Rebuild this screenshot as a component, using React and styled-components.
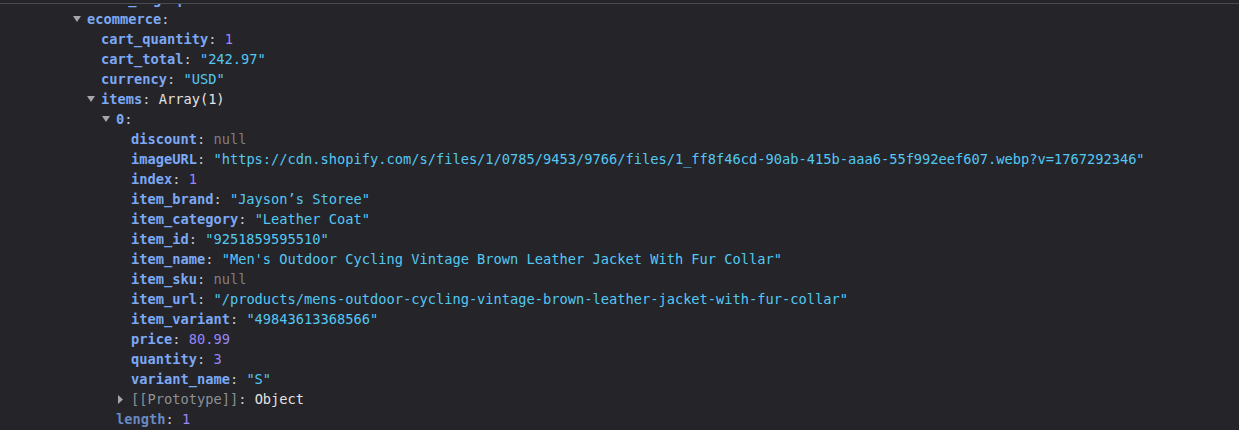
import React from "react";
import styled, { createGlobalStyle } from "styled-components";

const Global = createGlobalStyle`
  html, body { margin: 0; padding: 0; background: #242429; }
  body { overflow: hidden; }
`;

const Viewport = styled.div`
  position: relative;
  width: 1239px;
  height: 430px;
  overflow: hidden;
  background: #242429;
  font-family: "DejaVu Sans Mono", "Liberation Mono", monospace;
  font-size: 13.7px;
  color: #e3e3e3;
`;

const Tree = styled.div`
  display: flex;
  flex-direction: column;
  margin-top: -11px;
`;

const Row = styled.div`
  display: flex;
  align-items: center;
  height: 20px;
  white-space: pre;
  padding-left: ${(p) => p.$indent - 14}px;
`;

const Toggle = styled.span`
  display: inline-flex;
  align-items: center;
  justify-content: flex-start;
  width: 14px;
  height: 20px;
  flex: none;
`;

const Key = styled.span`
  font-weight: bold;
  color: ${(p) => (p.$dim ? "#6a89c2" : "#7ca8f4")};
`;

const ProtoKey = styled.span`
  color: #8e9196;
`;

const Colon = styled.span`
  color: #c8c8c8;
`;

const Value = styled.span`
  color: ${(p) =>
    ({
      string: "#55c8f2",
      number: "#9a86f8",
      null: "#7f7f84",
      object: "#e3e3e3",
      bool: "#9a86f8",
    }[p.$kind] || "#e3e3e3")};
`;

const TopEdge = styled.div`
  position: absolute;
  left: 0;
  right: 0;
  top: 0;
  height: 3px;
  background: #242429;
  border-bottom: 1px solid #4a4b50;
`;

const Caret = ({ open }) =>
  open ? (
    <svg width="8" height="6" viewBox="0 0 8 6">
      <path d="M0 0 L8 0 L4 6 Z" fill="#a4a6aa" />
    </svg>
  ) : (
    <svg width="6" height="9" viewBox="0 0 6 9" style={{ marginLeft: 1 }}>
      <path d="M0 0 L5 4.5 L0 9 Z" fill="#a4a6aa" />
    </svg>
  );

const L = [87, 101, 116, 131];

const rows = [
  { lv: 0, k: "email_signup", v: "false", t: "bool" },
  { lv: 0, k: "ecommerce", toggle: "open" },
  { lv: 1, k: "cart_quantity", v: "1", t: "number" },
  { lv: 1, k: "cart_total", v: '"242.97"', t: "string" },
  { lv: 1, k: "currency", v: '"USD"', t: "string" },
  { lv: 1, k: "items", v: "Array(1)", t: "object", toggle: "open" },
  { lv: 2, k: "0", toggle: "open" },
  { lv: 3, k: "discount", v: "null", t: "null" },
  {
    lv: 3,
    k: "imageURL",
    v: '"https://cdn.shopify.com/s/files/1/0785/9453/9766/files/1_ff8f46cd-90ab-415b-aaa6-55f992eef607.webp?v=1767292346"',
    t: "string",
  },
  { lv: 3, k: "index", v: "1", t: "number" },
  { lv: 3, k: "item_brand", v: '"Jayson\u2019s Storee"', t: "string" },
  { lv: 3, k: "item_category", v: '"Leather Coat"', t: "string" },
  { lv: 3, k: "item_id", v: '"9251859595510"', t: "string" },
  {
    lv: 3,
    k: "item_name",
    v: '"Men\'s Outdoor Cycling Vintage Brown Leather Jacket With Fur Collar"',
    t: "string",
  },
  { lv: 3, k: "item_sku", v: "null", t: "null" },
  {
    lv: 3,
    k: "item_url",
    v: '"/products/mens-outdoor-cycling-vintage-brown-leather-jacket-with-fur-collar"',
    t: "string",
  },
  { lv: 3, k: "item_variant", v: '"49843613368566"', t: "string" },
  { lv: 3, k: "price", v: "80.99", t: "number" },
  { lv: 3, k: "quantity", v: "3", t: "number" },
  { lv: 3, k: "variant_name", v: '"S"', t: "string" },
  { lv: 3, k: "[[Prototype]]", v: "Object", t: "object", toggle: "closed", proto: true },
  { lv: 2, k: "length", v: "1", t: "number", dim: true },
];

export default function App() {
  return (
    <Viewport>
      <Global />
      <Tree>
        {rows.map((r, i) => (
          <Row key={i} $indent={L[r.lv]}>
            <Toggle>{r.toggle ? <Caret open={r.toggle === "open"} /> : null}</Toggle>
            {r.proto ? <ProtoKey>{r.k}</ProtoKey> : <Key $dim={r.dim}>{r.k}</Key>}
            <Colon>: </Colon>
            {r.v ? <Value $kind={r.t}>{r.v}</Value> : null}
          </Row>
        ))}
      </Tree>
      <TopEdge />
    </Viewport>
  );
}
